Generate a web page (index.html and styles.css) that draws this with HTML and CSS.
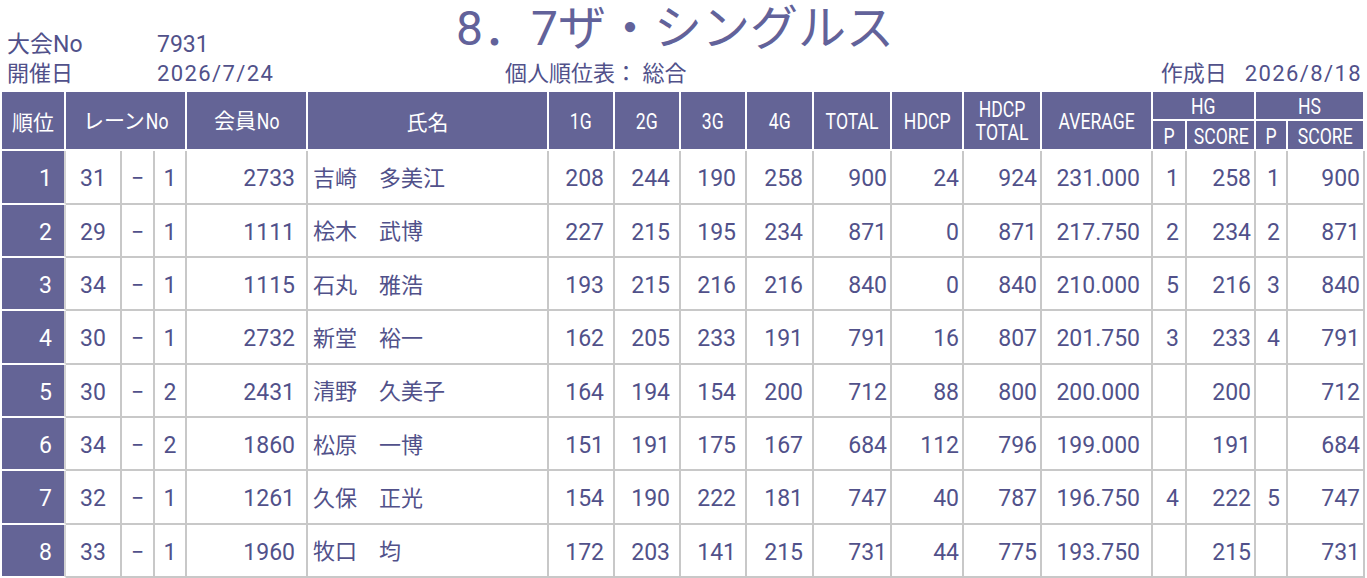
FILE: index.html
```html
<!DOCTYPE html>
<html lang="ja">
<head>
<meta charset="utf-8">
<title>個人順位表</title>
<link rel="stylesheet" href="styles.css">
</head>
<body>
<div class="top">
  <div class="row1">
    <span class="lbl">大会No</span>
    <span class="val">7931</span>
    <h1 class="title">8．7ザ・シングルス</h1>
  </div>
  <div class="row2">
    <span class="lbl">開催日</span>
    <span class="val date">2026/7/24</span>
    <span class="sub">個人順位表：&nbsp;総合</span>
    <span class="made">作成日<span class="date made-date">2026/8/18</span></span>
  </div>
</div>
<table class="rank">
  <colgroup>
    <col class="w64"><col class="w56"><col class="w33"><col class="w32"><col class="w121"><col class="w241">
    <col class="w66"><col class="w66"><col class="w66"><col class="w67"><col class="w78"><col class="w72">
    <col class="w78"><col class="w111"><col class="w34"><col class="w69"><col class="w32"><col class="w77">
  </colgroup>
  <thead>
    <tr class="h1">
      <th rowspan="2">順位</th>
      <th rowspan="2" colspan="3">レーン<span class="cx no">No</span></th>
      <th rowspan="2">会員<span class="cx no">No</span></th>
      <th rowspan="2">氏名</th>
      <th rowspan="2"><span class="cx">1G</span></th>
      <th rowspan="2"><span class="cx">2G</span></th>
      <th rowspan="2"><span class="cx">3G</span></th>
      <th rowspan="2"><span class="cx">4G</span></th>
      <th rowspan="2"><span class="cx">TOTAL</span></th>
      <th rowspan="2"><span class="cx">HDCP</span></th>
      <th rowspan="2"><span class="cx two"><span class="ln1">HDCP</span><span class="ln1">TOTAL</span></span></th>
      <th rowspan="2"><span class="cx">AVERAGE</span></th>
      <th colspan="2"><span class="cx">HG</span></th>
      <th colspan="2"><span class="cx">HS</span></th>
    </tr>
    <tr class="h2">
      <th><span class="cx">P</span></th><th><span class="cx">SCORE</span></th><th><span class="cx">P</span></th><th><span class="cx">SCORE</span></th>
    </tr>
  </thead>
  <tbody>
    <tr><td class="rk">1</td><td class="ln">31</td><td class="ds">−</td><td class="ln">1</td><td class="mem">2733</td><td class="nm">吉崎　多美江</td><td class="g">208</td><td class="g">244</td><td class="g">190</td><td class="g">258</td><td class="tot">900</td><td class="tot">24</td><td class="tot">924</td><td class="avg">231.000</td><td class="p">1</td><td class="sc">258</td><td class="p">1</td><td class="sc">900</td></tr>
    <tr><td class="rk">2</td><td class="ln">29</td><td class="ds">−</td><td class="ln">1</td><td class="mem">1111</td><td class="nm">桧木　武博</td><td class="g">227</td><td class="g">215</td><td class="g">195</td><td class="g">234</td><td class="tot">871</td><td class="tot">0</td><td class="tot">871</td><td class="avg">217.750</td><td class="p">2</td><td class="sc">234</td><td class="p">2</td><td class="sc">871</td></tr>
    <tr><td class="rk">3</td><td class="ln">34</td><td class="ds">−</td><td class="ln">1</td><td class="mem">1115</td><td class="nm">石丸　雅浩</td><td class="g">193</td><td class="g">215</td><td class="g">216</td><td class="g">216</td><td class="tot">840</td><td class="tot">0</td><td class="tot">840</td><td class="avg">210.000</td><td class="p">5</td><td class="sc">216</td><td class="p">3</td><td class="sc">840</td></tr>
    <tr><td class="rk">4</td><td class="ln">30</td><td class="ds">−</td><td class="ln">1</td><td class="mem">2732</td><td class="nm">新堂　裕一</td><td class="g">162</td><td class="g">205</td><td class="g">233</td><td class="g">191</td><td class="tot">791</td><td class="tot">16</td><td class="tot">807</td><td class="avg">201.750</td><td class="p">3</td><td class="sc">233</td><td class="p">4</td><td class="sc">791</td></tr>
    <tr><td class="rk">5</td><td class="ln">30</td><td class="ds">−</td><td class="ln">2</td><td class="mem">2431</td><td class="nm">清野　久美子</td><td class="g">164</td><td class="g">194</td><td class="g">154</td><td class="g">200</td><td class="tot">712</td><td class="tot">88</td><td class="tot">800</td><td class="avg">200.000</td><td class="p"></td><td class="sc">200</td><td class="p"></td><td class="sc">712</td></tr>
    <tr><td class="rk">6</td><td class="ln">34</td><td class="ds">−</td><td class="ln">2</td><td class="mem">1860</td><td class="nm">松原　一博</td><td class="g">151</td><td class="g">191</td><td class="g">175</td><td class="g">167</td><td class="tot">684</td><td class="tot">112</td><td class="tot">796</td><td class="avg">199.000</td><td class="p"></td><td class="sc">191</td><td class="p"></td><td class="sc">684</td></tr>
    <tr><td class="rk">7</td><td class="ln">32</td><td class="ds">−</td><td class="ln">1</td><td class="mem">1261</td><td class="nm">久保　正光</td><td class="g">154</td><td class="g">190</td><td class="g">222</td><td class="g">181</td><td class="tot">747</td><td class="tot">40</td><td class="tot">787</td><td class="avg">196.750</td><td class="p">4</td><td class="sc">222</td><td class="p">5</td><td class="sc">747</td></tr>
    <tr><td class="rk">8</td><td class="ln">33</td><td class="ds">−</td><td class="ln">1</td><td class="mem">1960</td><td class="nm">牧口　均</td><td class="g">172</td><td class="g">203</td><td class="g">141</td><td class="g">215</td><td class="tot">731</td><td class="tot">44</td><td class="tot">775</td><td class="avg">193.750</td><td class="p"></td><td class="sc">215</td><td class="p"></td><td class="sc">731</td></tr>
  </tbody>
</table>
</body>
</html>
```

FILE: styles.css
```css
* { box-sizing: border-box; margin: 0; padding: 0; }

body {
  margin: 0;
  background: #ffffff;
  font-family: Roboto, "Noto Sans CJK JP", sans-serif;
  color: #51518a;
}

.top { height: 92px; }

.row1 {
  display: grid;
  grid-template-columns: 157px 299px auto;
  height: 56px;
}

.row1 .lbl,
.row1 .val {
  font-size: 23px;
  line-height: 24px;
  padding-top: 33px;
}

.row1 .lbl,
.row2 .lbl { padding-left: 7px; }

.title {
  font-size: 48px;
  line-height: 48px;
  font-weight: 400;
  margin-top: 5px;
  color: #62629a;
  white-space: nowrap;
}

.row2 {
  display: grid;
  grid-template-columns: 157px 348px auto 1fr;
  height: 36px;
  padding-top: 3px;
  font-size: 22px;
  line-height: 30px;
}

.date { letter-spacing: 1.4px; }

.sub { white-space: nowrap; }

.made {
  justify-self: end;
  padding-right: 5px;
  white-space: nowrap;
}

.made-date { margin-left: 18px; }

/* table */
.rank {
  border-collapse: separate;
  border-spacing: 0;
  table-layout: fixed;
  width: 1363px;
  margin-left: 2px;
}

.w32 { width: 32px; } .w33 { width: 33px; } .w34 { width: 34px; }
.w56 { width: 56px; } .w64 { width: 64px; } .w66 { width: 66px; }
.w67 { width: 67px; } .w69 { width: 69px; } .w72 { width: 72px; }
.w77 { width: 77px; } .w78 { width: 78px; } .w111 { width: 111px; }
.w121 { width: 121px; } .w241 { width: 241px; }

th {
  background: #646496;
  color: #ffffff;
  font-weight: 400;
  font-family: "Noto Sans CJK JP", sans-serif;
  font-size: 21px;
  line-height: 24px;
  text-align: center;
  vertical-align: middle;
  border-right: 2px solid #ffffff;
  border-bottom: 2px solid #ffffff;
  padding: 0;
  white-space: nowrap;
}

/* condensed latin header labels */
.cx {
  display: inline-block;
  font-family: Roboto, sans-serif;
  font-size: 22px;
  line-height: 24px;
  transform: scaleX(0.8);
  transform-origin: center;
  vertical-align: middle;
}

.cx.no { margin: 0 -3px 0 -2px; }

.cx.two { line-height: 23px; }

.ln1 {
  display: block;
  height: 23px;
  line-height: 23px;
}

.h1 { height: 28px; }
.h2 { height: 30px; }

tbody tr { height: 53.33px; }

td {
  font-size: 23px;
  line-height: 1;
  vertical-align: middle;
  border-right: 2px solid #c8c8c8;
  border-bottom: 2px solid #c8c8c8;
  padding: 4px 0 0;
  white-space: nowrap;
  overflow: hidden;
}

td.rk {
  background: #646496;
  color: #ffffff;
  border-right-color: #d2d2d2;
  border-bottom-color: #ffffff;
  text-align: right;
  padding-right: 12px;
}

td.ln, td.ds { text-align: center; }

td.mem { text-align: right; padding-right: 11px; }

td.nm {
  text-align: left;
  padding-left: 5px;
  font-size: 22px;
}

td.g { text-align: right; padding-right: 9px; }
td.tot { text-align: right; padding-right: 3px; }
td.avg { text-align: right; padding-right: 11px; }
td.p { text-align: right; padding-right: 6px; }
td.sc { text-align: right; padding-right: 3px; }
```
